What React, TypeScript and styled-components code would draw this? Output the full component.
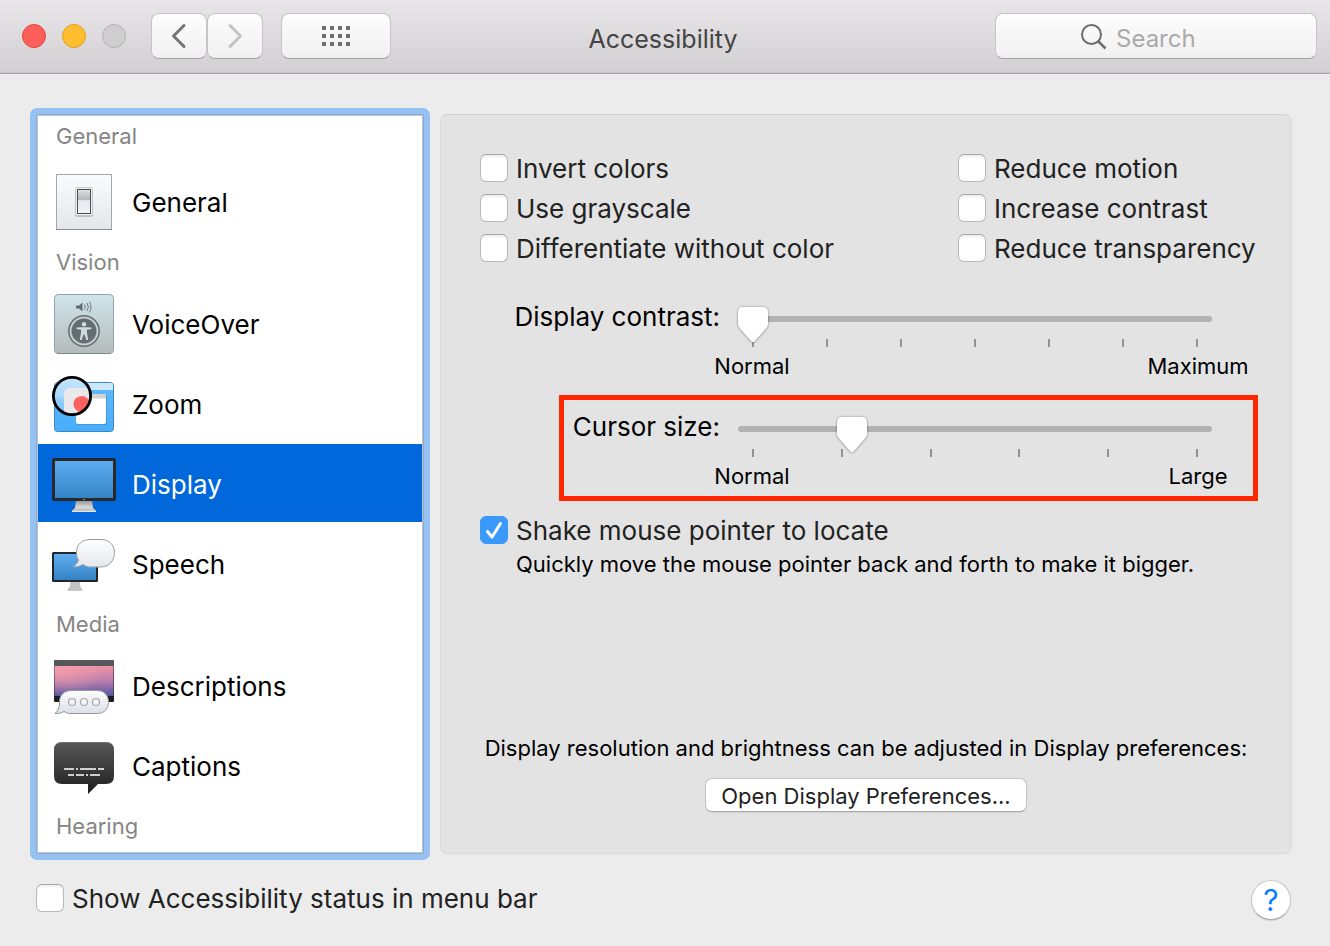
import React, { useState } from 'react';
import styled, { createGlobalStyle, css } from 'styled-components';

const GlobalStyle = createGlobalStyle`
  *, *::before, *::after { box-sizing: border-box; }
  body {
    margin: 0;
    background: #ececec;
    color: #000;
    font-family: Inter, Roboto, "Liberation Sans", sans-serif;
    font-size: 26px;
    line-height: 30px;
  }
  button, input { font: inherit; color: inherit; }
`;

const Window = styled.div`
  min-height: 100vh;
  min-width: 1200px;
  background: #ececec;
`;

/* ---------- title bar ---------- */

const TitleBar = styled.header`
  display: grid;
  grid-template-columns: 1fr auto 1fr;
  align-items: start;
  height: 74px;
  padding: 13px 13px 0;
  background: linear-gradient(#e8e6e8, #d1cfd1);
  border-bottom: 1px solid #a9a7a9;
  box-shadow: inset 0 -1px 0 #c4c2c4;
`;

const TitleControls = styled.div`
  display: flex;
  align-items: center;
  padding-left: 9px;
`;

const Lights = styled.div`
  display: flex;
  gap: 16px;
  margin-right: 25px;
`;

const Light = styled.button<{ $fill: string; $edge: string }>`
  width: 24px;
  height: 24px;
  padding: 0;
  border: 1px solid ${(p) => p.$edge};
  border-radius: 50%;
  background: ${(p) => p.$fill};
`;

const toolSurface = css`
  height: 46px;
  border: 1px solid #c6c5c6;
  border-bottom-color: #a3a2a3;
  border-radius: 8px;
  background: linear-gradient(#fdfdfd, #f0f0f0);
`;

const ToolButton = styled.button<{ $wide?: boolean }>`
  ${toolSurface}
  display: flex;
  align-items: center;
  justify-content: center;
  width: ${(p) => (p.$wide ? 110 : 56)}px;
  padding: 0;
  margin-left: ${(p) => (p.$wide ? 18 : 0)}px;
`;

const Title = styled.h1`
  margin: 0;
  padding: 11px 4px 0 0;
  font-size: 25px;
  font-weight: 400;
  color: #444;
`;

const SearchField = styled.label`
  ${toolSurface}
  display: flex;
  align-items: center;
  justify-self: end;
  gap: 8px;
  width: 322px;
  padding: 2px 0 0 84px;
  font-size: 24px;
`;

const SearchInput = styled.input`
  flex: 1;
  min-width: 0;
  height: 32px;
  padding: 2px 0 0;
  border: 0;
  outline: 0;
  background: none;
  &::placeholder { color: #aaa; opacity: 1; }
`;

/* ---------- layout ---------- */

const Content = styled.main`
  display: flex;
  gap: 10px;
  padding: 34px 38px 0 30px;
`;

const Sidebar = styled.nav`
  display: flex;
  flex: none;
  flex-direction: column;
  gap: 2px;
  width: 400px;
  padding: 2px 2px 8px;
  border: 6px solid #96c1f3;
  border-radius: 7px;
  background: #fff;
  box-shadow: inset 0 0 0 1px #84abdb, inset 0 0 0 2px #c3c3c3;
`;

const GroupTitle = styled.h2<{ $first?: boolean }>`
  margin: 0 0 ${(p) => (p.$first ? 4 : 0)}px;
  padding-left: 18px;
  font-size: 22px;
  font-weight: 400;
  line-height: 40px;
  color: #858585;
`;

const Item = styled.button<{ $active: boolean }>`
  display: flex;
  align-items: center;
  gap: 14px;
  width: 100%;
  height: 78px;
  padding: 2px 12px 0;
  border: 0;
  background: ${(p) => (p.$active ? '#0068da' : 'transparent')};
  color: ${(p) => (p.$active ? '#fff' : '#000')};
  text-align: left;
`;

const Caption = styled.span`
  padding-top: 2px;
`;

const ItemIcon = styled.svg`
  flex: none;
  width: 68px;
  height: 68px;
`;

const Panel = styled.section`
  display: flex;
  flex: 1;
  flex-direction: column;
  margin: 6px 0;
  padding: 33px 39px 41px;
  border: 1px solid #d9d9d9;
  border-top-color: #d0d0d0;
  border-radius: 8px;
  background: #e3e3e3;
`;

/* ---------- check boxes ---------- */

const CheckColumns = styled.div`
  display: flex;
  justify-content: space-between;
`;

const CheckColumn = styled.div<{ $width?: number }>`
  display: flex;
  flex-direction: column;
  width: ${(p) => (p.$width ? `${p.$width}px` : 'auto')};
`;

const CheckLabel = styled.label`
  display: flex;
  align-items: center;
  gap: 8px;
  height: 40px;
  color: #222;
  white-space: nowrap;
`;

const CheckFrame = styled.span`
  display: grid;
  flex: none;
  width: 28px;
  height: 28px;
  > * { grid-area: 1 / 1; }
`;

const CheckInput = styled.input`
  appearance: none;
  width: 28px;
  height: 28px;
  margin: 0;
  border: 1px solid #b9b9b9;
  border-top-color: #a6a6a6;
  border-radius: 6px;
  background: #fff;
  box-shadow: inset 0 2px 2px #f0f0f0;
  &:checked {
    border-color: #3b99fc;
    background: #3b99fc;
    box-shadow: none;
  }
  & + svg { visibility: hidden; pointer-events: none; }
  &:checked + svg { visibility: visible; }
`;

function Check({ label, on = false }: { label: string; on?: boolean }) {
  return (
    <CheckLabel>
      <CheckFrame>
        <CheckInput type="checkbox" defaultChecked={on} />
        <svg width="28" height="28" viewBox="0 0 28 28" fill="none">
          <path d="M7.500 15.500L12 21L20.500 7.500" stroke="#fff" strokeWidth="3" strokeLinecap="round" strokeLinejoin="round" />
        </svg>
      </CheckFrame>
      <Caption>{label}</Caption>
    </CheckLabel>
  );
}

/* ---------- sliders ---------- */

const Sliders = styled.div`
  display: flex;
  flex-direction: column;
  gap: 32px;
  margin: 34px 0 20px;
`;

const SliderRow = styled.div<{ $marked?: boolean }>`
  position: relative;
  display: grid;
  grid-template-columns: 240px 1fr;
  column-gap: 17px;
  padding-right: 39px;
  ${(p) =>
    p.$marked &&
    css`
      &::after {
        content: '';
        position: absolute;
        inset: -17px -6px -11px 79px;
        border: 5px solid #ff2600;
        pointer-events: none;
      }
    `}
`;

const SliderLabel = styled.label`
  text-align: right;
`;

const SliderBody = styled.div`
  padding-top: 5px;
`;

const SliderStack = styled.div`
  display: grid;
  height: 40px;
  > * { grid-area: 1 / 1; }
`;

const Track = styled.div`
  height: 6px;
  margin: 9px 1px 0;
  border-radius: 3px;
  background: #b2b2b2;
`;

const Ticks = styled.div`
  display: flex;
  align-self: end;
  justify-content: space-between;
  height: 8px;
  padding: 0 15px;
`;

const Tick = styled.i`
  width: 2px;
  background: #929292;
`;

const thumb = css`
  width: 32px;
  height: 36px;
  border: 0;
  border-radius: 0;
  background: #fff;
  clip-path: path('M6 0H26Q31 0 31 5V17Q31 19 29.5 21L17.5 34.5Q16 36 14.5 34.5L2.5 21Q1 19 1 17V5Q1 0 6 0Z');
`;

const Range = styled.input`
  appearance: none;
  width: 100%;
  height: 36px;
  margin: 0;
  background: none;
  filter: drop-shadow(0 0 1px rgba(0, 0, 0, 0.35)) drop-shadow(0 1px 1px rgba(0, 0, 0, 0.15));
  &::-webkit-slider-runnable-track { height: 36px; background: none; }
  &::-webkit-slider-thumb { appearance: none; ${thumb} }
  &::-moz-range-thumb { ${thumb} }
`;

const Scale = styled.div`
  display: flex;
  justify-content: space-between;
  margin: 5px -36px 0;
  font-size: 22px;
  line-height: 28px;
`;

const ScaleText = styled.span`
  width: 102px;
  text-align: center;
`;

interface SliderProps {
  id: string;
  label: string;
  ticks: number;
  value: number;
  high: string;
  marked?: boolean;
}

function Slider({ id, label, ticks, value, high, marked }: SliderProps) {
  return (
    <SliderRow $marked={marked}>
      <SliderLabel htmlFor={id}>{label}</SliderLabel>
      <SliderBody>
        <SliderStack>
          <Track />
          <Ticks>
            {Array.from({ length: ticks }, (_, i) => (
              <Tick key={i} />
            ))}
          </Ticks>
          <Range id={id} type="range" min={0} max={100} step="any" defaultValue={value} />
        </SliderStack>
        <Scale>
          <ScaleText>Normal</ScaleText>
          <ScaleText>{high}</ScaleText>
        </Scale>
      </SliderBody>
    </SliderRow>
  );
}

/* ---------- remaining panel and footer parts ---------- */

const Hint = styled.p`
  margin: 0;
  padding-left: 36px;
  font-size: 22px;
  line-height: 28px;
`;

const DisplayNote = styled.div`
  display: flex;
  flex-direction: column;
  align-items: center;
  gap: 16px;
  margin-top: auto;
  font-size: 22px;
  line-height: 28px;
  white-space: nowrap;
`;

const PushButton = styled.button`
  width: 322px;
  height: 34px;
  padding: 1px 0 0;
  border: 1px solid #c4c4c4;
  border-bottom-color: #a8a8a8;
  border-radius: 7px;
  background: #fff;
  color: #222;
  line-height: 30px;
  box-shadow: 0 1px 1px rgba(0, 0, 0, 0.08);
`;

const Footer = styled.footer`
  display: flex;
  align-items: center;
  justify-content: space-between;
  padding: 16px 39px 24px 36px;
`;

const HelpButton = styled.button`
  width: 40px;
  height: 40px;
  margin-top: 4px;
  padding: 0;
  border: 1px solid #c8c8c8;
  border-bottom-color: #adadad;
  border-radius: 50%;
  background: #fff;
  color: #087cff;
  font-size: 30px;
  box-shadow: 0 1px 1px rgba(0, 0, 0, 0.12);
`;

/* ---------- sidebar icons, drawn on a 68 unit square ---------- */

const icons: Record<string, React.ReactNode> = {
  General: (
    <>
      <defs>
        <linearGradient id="gPlate" x2="0" y2="1">
          <stop stopColor="#fafbfc" />
          <stop offset="1" stopColor="#e3e6ea" />
        </linearGradient>
        <linearGradient id="gSwitch" x2="0" y2="1">
          <stop stopColor="#e4e4e6" />
          <stop offset=".12" stopColor="#d2d3d5" />
          <stop offset=".45" stopColor="#b4b5b8" />
          <stop offset=".46" stopColor="#e8ebef" />
          <stop offset="1" stopColor="#eef1f5" />
        </linearGradient>
      </defs>
      <rect x="6.500" y="6.500" width="55" height="55" fill="url(#gPlate)" stroke="#a5a7aa" />
      <path d="M6 61.500H62" stroke="#8e9093" />
      <rect x="25" y="20" width="18" height="29" rx="2" fill="#c0c1c3" />
      <rect x="25.500" y="19.500" width="17" height="28" rx="1.500" fill="#f3f4f6" stroke="#b6b7b9" strokeWidth=".7" />
      <rect x="27.500" y="21.500" width="13" height="24" fill="url(#gSwitch)" stroke="#4a4a50" />
    </>
  ),
  VoiceOver: (
    <>
      <defs>
        <linearGradient id="vPlate" x2="0" y2="1">
          <stop stopColor="#cfe5eb" />
          <stop offset="1" stopColor="#b4bbbc" />
        </linearGradient>
      </defs>
      <rect x="4.500" y="4.500" width="59" height="59" rx="4" fill="url(#vPlate)" stroke="#93a3a8" />
      <path d="M7 63.500H61" stroke="#7f8888" />
      <path d="M26 15.500H29L32.500 12.500V21.500L29 18.500H26Z" fill="#646d70" />
      <path d="M34.500 14.500Q36.200 17 34.500 19.500M37 13Q39.800 17 37 21M39.300 11.500Q42.800 17 39.300 22.500" fill="none" stroke="#70797c" strokeWidth="1" />
      <circle cx="34" cy="41" r="15.200" fill="#c3cfd1" stroke="#646d6f" strokeWidth="1.500" />
      <circle cx="34" cy="41" r="12.500" fill="#646d6f" />
      <circle cx="34" cy="34.200" r="2.200" fill="#d2dcde" />
      <path d="M26.500 37.500L32 37.300H36L41.500 37.500V39L36.800 39.800L37 43L38.200 50H36.300L34.500 44.500H33.500L31.700 50H29.800L31 43L31.200 39.800L26.500 39Z" fill="#d2dcde" />
    </>
  ),
  Zoom: (
    <>
      <defs>
        <linearGradient id="zDesk" x2="0" y2="1">
          <stop stopColor="#64b9fa" />
          <stop offset="1" stopColor="#48adfb" />
        </linearGradient>
        <linearGradient id="zLens" x2="0" y2="1">
          <stop stopColor="#b9dffc" />
          <stop offset="1" stopColor="#78c3fb" />
        </linearGradient>
        <linearGradient id="zPage" x2="0" y2="1">
          <stop stopColor="#e3e3e5" />
          <stop offset="1" stopColor="#eeeeef" />
        </linearGradient>
        <clipPath id="zClip">
          <circle cx="22" cy="26" r="18" />
        </clipPath>
      </defs>
      <rect x="4.500" y="12.500" width="59" height="49" rx="3" fill="url(#zDesk)" stroke="#3a87c4" />
      <path d="M5 20V15Q5 13 7 13H61Q63 13 63 15V20Z" fill="#cde8fc" />
      <rect x="26" y="24" width="31" height="31" rx="2" fill="#2c7fc0" opacity=".5" />
      <rect x="26" y="24" width="30" height="30" rx="2" fill="#fff" />
      <path d="M26 28.500V26Q26 24 28 24H54Q56 24 56 26V28.500Z" fill="#d2d3d5" />
      <circle cx="22" cy="26" r="18" fill="url(#zLens)" />
      <g clipPath="url(#zClip)">
        <rect x="14" y="18" width="34" height="34" rx="5" fill="url(#zPage)" />
        <circle cx="31.500" cy="34" r="8" fill="#fd625e" />
        <path d="M4 26Q22 34 40 22V4H4Z" fill="#fff" opacity=".2" />
      </g>
      <circle cx="22" cy="26" r="18.600" fill="none" stroke="#000" strokeWidth="2.800" />
    </>
  ),
  Display: (
    <g transform="translate(0 1)">
      <defs>
        <linearGradient id="dScreen" x2="0" y2="1">
          <stop stopColor="#5dadf0" />
          <stop offset="1" stopColor="#3484c4" />
        </linearGradient>
        <linearGradient id="dStand" x2="0" y2="1">
          <stop stopColor="#8f8f8f" />
          <stop offset=".6" stopColor="#d8d8d8" />
          <stop offset="1" stopColor="#b5b5b5" />
        </linearGradient>
      </defs>
      <path d="M26 49H42L43 57L46 59.500V61H22V59.500L25 57Z" fill="url(#dStand)" />
      <path d="M22 60.500H46" stroke="#e8e8e8" />
      <rect x="2" y="7" width="64" height="43" rx="2" fill="#27292c" />
      <rect x="5" y="10" width="58" height="37" fill="url(#dScreen)" />
      <circle cx="34" cy="48.500" r=".8" fill="#aaa" />
    </g>
  ),
  Speech: (
    <g transform="translate(0 1)">
      <defs>
        <linearGradient id="sScreen" x2="0" y2="1">
          <stop stopColor="#5dadf0" />
          <stop offset="1" stopColor="#3484c4" />
        </linearGradient>
        <linearGradient id="sBubble" x2="0" y2="1">
          <stop stopColor="#fff" />
          <stop offset="1" stopColor="#e3e6ec" />
        </linearGradient>
      </defs>
      <path d="M21 50H29L30 56L32 58V59.500H18V58L20 56Z" fill="#c4c4c4" stroke="#b0b0b0" strokeWidth=".5" />
      <rect x="2" y="21" width="46" height="30" rx="1.500" fill="#232629" />
      <rect x="4" y="23" width="42" height="26" fill="url(#sScreen)" />
      <path d="M41 8.500H51C59 8.500 64.500 14 64.500 21.500C64.500 30 59 36 50 36H40C37 36 35 35 33 33.500Q28 36.500 23 36Q27.500 33 28.500 29C27 27 26.500 25 26.500 21.500C26.500 13 32 8.500 41 8.500Z" fill="url(#sBubble)" stroke="#999da1" />
    </g>
  ),
  Descriptions: (
    <>
      <defs>
        <linearGradient id="eSky" x2="0" y2="1">
          <stop stopColor="#ec95a8" />
          <stop offset=".5" stopColor="#b77cad" />
          <stop offset="1" stopColor="#5556a2" />
        </linearGradient>
        <radialGradient id="eGlow" cx=".1" cy=".2" r=".8">
          <stop stopColor="#ffa6a8" stopOpacity=".6" />
          <stop offset="1" stopColor="#ffa6a8" stopOpacity="0" />
        </radialGradient>
        <linearGradient id="eBubble" x2="0" y2="1">
          <stop stopColor="#fbfcfd" />
          <stop offset="1" stopColor="#dde1e8" />
        </linearGradient>
      </defs>
      <rect x="4" y="8" width="60" height="42" rx="1.500" fill="#1d1d1f" />
      <path d="M4 14V9.500Q4 8 5.500 8H62.500Q64 8 64 9.500V14Z" fill="#555759" />
      <rect x="4.500" y="14" width="59" height="30" fill="url(#eSky)" />
      <rect x="4.500" y="14" width="59" height="30" fill="url(#eGlow)" />
      <path d="M22 38.500H47C54 38.500 58.500 43 58.500 50C58.500 57 54 61.500 47 61.500H20Q17.500 61.500 14 59.500Q10 62 5 61.500Q9 58.500 9.500 53V50C9.500 43 14 38.500 22 38.500Z" fill="url(#eBubble)" stroke="#93979e" />
      {[22, 34, 46].map((x) => (
        <circle key={x} cx={x} cy="50" r="3.500" fill="#f4f5f8" stroke="#a4a8af" strokeWidth="1.200" />
      ))}
    </>
  ),
  Captions: (
    <>
      <defs>
        <linearGradient id="cBox" x2="0" y2="1">
          <stop stopColor="#575757" />
          <stop offset=".8" stopColor="#2a2a2a" />
          <stop offset="1" stopColor="#1c1c1c" />
        </linearGradient>
      </defs>
      <path d="M12 10H56Q64 10 64 18V44Q64 52 56 52H48L38 62V52H12Q4 52 4 44V18Q4 10 12 10Z" fill="url(#cBox)" />
      <path d="M7 12.500Q9 10.500 12 10.500H56Q59 10.500 61 12.500" fill="none" stroke="#777" strokeWidth=".8" />
      <path d="M14 37H24M26 37H28M30 37H46M48 37H54M18 43H24M26 43H34M36 43H38M40 43H50" stroke="#cfcfcf" strokeWidth="2" />
    </>
  ),
};

const groups = [
  { title: 'General', items: ['General'] },
  { title: 'Vision', items: ['VoiceOver', 'Zoom', 'Display', 'Speech'] },
  { title: 'Media', items: ['Descriptions', 'Captions'] },
  { title: 'Hearing', items: [] },
];

export default function App() {
  const [active, setActive] = useState('Display');

  return (
    <>
      <GlobalStyle />
      <Window>
        <TitleBar>
          <TitleControls>
            <Lights>
              <Light aria-label="Close" $fill="#ff5f58" $edge="#e0443e" />
              <Light aria-label="Minimize" $fill="#ffbe2f" $edge="#dea123" />
              <Light aria-label="Full screen" disabled $fill="#cfcecf" $edge="#b3b2b3" />
            </Lights>
            <ToolButton aria-label="Back">
              <svg width="16" height="26" viewBox="0 0 16 26" fill="none" stroke="#757575" strokeWidth="3" strokeLinecap="round" strokeLinejoin="round">
                <path d="M13 2.500L2.500 13L13 23.500" />
              </svg>
            </ToolButton>
            <ToolButton aria-label="Forward">
              <svg width="16" height="26" viewBox="0 0 16 26" fill="none" stroke="#c3c3c3" strokeWidth="3" strokeLinecap="round" strokeLinejoin="round">
                <path d="M3 2.500L13.500 13L3 23.500" />
              </svg>
            </ToolButton>
            <ToolButton $wide aria-label="Show all">
              <svg width="28" height="20" viewBox="0 0 28 20" fill="#6f6f6f">
                {[0, 8, 16].map((y) => [0, 8, 16, 24].map((x) => <rect key={`${x}-${y}`} x={x} y={y} width="4" height="4" />))}
              </svg>
            </ToolButton>
          </TitleControls>
          <Title>Accessibility</Title>
          <SearchField>
            <svg width="28" height="28" viewBox="0 0 28 28" fill="none" stroke="#6c6c6c" strokeWidth="2">
              <circle cx="11.500" cy="11.500" r="9.500" />
              <path d="M18 18L25.500 25.500" strokeWidth="2.500" />
            </svg>
            <SearchInput type="search" aria-label="Search" placeholder="Search" />
          </SearchField>
        </TitleBar>

        <Content>
          <Sidebar>
            {groups.map((group, i) => (
              <React.Fragment key={group.title}>
                <GroupTitle $first={i === 0}>{group.title}</GroupTitle>
                {group.items.map((name) => (
                  <Item key={name} $active={name === active} onClick={() => setActive(name)}>
                    <ItemIcon viewBox="0 0 68 68" aria-hidden="true">
                      {icons[name]}
                    </ItemIcon>
                    <Caption>{name}</Caption>
                  </Item>
                ))}
              </React.Fragment>
            ))}
          </Sidebar>

          <Panel>
            <CheckColumns>
              <CheckColumn>
                <Check label="Invert colors" />
                <Check label="Use grayscale" />
                <Check label="Differentiate without color" />
              </CheckColumn>
              <CheckColumn $width={294}>
                <Check label="Reduce motion" />
                <Check label="Increase contrast" />
                <Check label="Reduce transparency" />
              </CheckColumn>
            </CheckColumns>

            <Sliders>
              <Slider id="contrast" label="Display contrast:" ticks={7} value={0} high="Maximum" />
              <Slider id="cursor" label="Cursor size:" ticks={6} value={22.3} high="Large" marked />
            </Sliders>

            <Check label="Shake mouse pointer to locate" on />
            <Hint>Quickly move the mouse pointer back and forth to make it bigger.</Hint>

            <DisplayNote>
              <span>Display resolution and brightness can be adjusted in Display preferences:</span>
              <PushButton>Open Display Preferences...</PushButton>
            </DisplayNote>
          </Panel>
        </Content>

        <Footer>
          <Check label="Show Accessibility status in menu bar" />
          <HelpButton aria-label="Help">?</HelpButton>
        </Footer>
      </Window>
    </>
  );
}
